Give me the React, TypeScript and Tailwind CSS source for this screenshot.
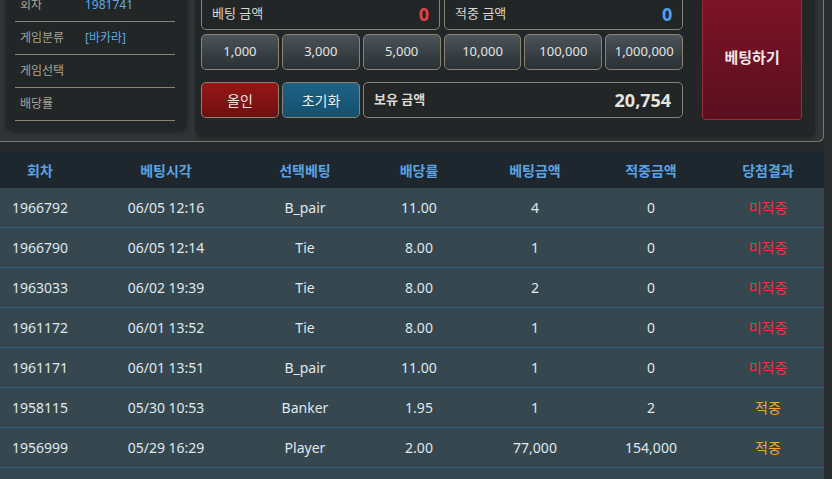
import React from 'react'

const chips = ['1,000', '3,000', '5,000', '10,000', '100,000', '1,000,000']

type Row = {
    round: string
    time: string
    pick: string
    odds: string
    bet: string
    win: string
    hit: boolean
}

const rows: Row[] = [
    { round: '1966792', time: '06/05 12:16', pick: 'B_pair', odds: '11.00', bet: '4', win: '0', hit: false },
    { round: '1966790', time: '06/05 12:14', pick: 'Tie', odds: '8.00', bet: '1', win: '0', hit: false },
    { round: '1963033', time: '06/02 19:39', pick: 'Tie', odds: '8.00', bet: '2', win: '0', hit: false },
    { round: '1961172', time: '06/01 13:52', pick: 'Tie', odds: '8.00', bet: '1', win: '0', hit: false },
    { round: '1961171', time: '06/01 13:51', pick: 'B_pair', odds: '11.00', bet: '1', win: '0', hit: false },
    { round: '1958115', time: '05/30 10:53', pick: 'Banker', odds: '1.95', bet: '1', win: '2', hit: true },
    { round: '1956999', time: '05/29 16:29', pick: 'Player', odds: '2.00', bet: '77,000', win: '154,000', hit: true },
]

const cols = 'grid grid-cols-[80px_172px_106px_122px_110px_122px_1fr]'

const InfoRow = ({ label, value }: { label: string; value?: string }) => (
    <div className="flex items-center h-[33px] border-b border-[#8a8273] text-[12px]">
        <span className="w-[70px] pl-[5px] text-[#a7a498]">{label}</span>
        <span className="text-[#5ea9e2]">{value}</span>
    </div>
)

export default function App() {
    return (
        <div className="w-[832px] h-[479px] overflow-hidden bg-[#2a2d2e] font-['Noto_Sans','Noto_Sans_CJK_KR',sans-serif]">
            {/* top betting area */}
            <div className="w-[824px] h-[182px] -mt-[40px] flex items-start gap-[10px] pl-[5px] pt-[10px] bg-[#2f3537] border-r border-b border-[#7c776d] rounded-br-[6px]">
                {/* left info */}
                <div className="w-[180px] h-[160px] pt-[19px] px-[10px] bg-[#232627] rounded-[6px] shadow-[2px_2px_4px_rgba(0,0,0,0.4)]">
                    <InfoRow label="회차" value="1981741" />
                    <InfoRow label="게임분류" value="[바카라]" />
                    <InfoRow label="게임선택" />
                    <InfoRow label="배당률" />
                </div>

                {/* betting panel */}
                <div className="w-[618px] h-[166px] flex gap-[19px] pl-[6px] pr-[11px] pt-[24px] pb-[17px] bg-[#232627] rounded-[6px] shadow-[2px_2px_4px_rgba(0,0,0,0.4)]">
                    <div className="w-[483px] flex flex-col">
                        <div className="flex gap-[4px]">
                            <div className="flex-1 h-[36px] flex items-end justify-between px-[10px] pb-[6px] border border-[#8a8273] rounded-[5px]">
                                <span className="text-[13px] text-[#d8d6cf]">베팅 금액</span>
                                <span className="text-[18px] font-bold leading-none text-[#e04444]">0</span>
                            </div>
                            <div className="flex-1 h-[36px] flex items-end justify-between px-[10px] pb-[6px] border border-[#8a8273] rounded-[5px]">
                                <span className="text-[13px] text-[#d8d6cf]">적중 금액</span>
                                <span className="text-[18px] font-bold leading-none text-[#4ba3ea]">0</span>
                            </div>
                        </div>
                        <div className="grid grid-cols-6 gap-[3px] mt-[4px]">
                            {chips.map((c) => (
                                <button key={c} className="h-[36px] text-[13px] text-[#e4e4e0] bg-gradient-to-b from-[#4b545a] to-[#2a3034] border border-[#8a8273] rounded-[5px]">
                                    {c}
                                </button>
                            ))}
                        </div>
                        <div className="flex gap-[3px] mt-[12px]">
                            <button className="w-[78px] h-[36px] text-[14px] text-[#f0e8e6] bg-gradient-to-b from-[#981616] to-[#6e1010] border border-[#8a8273] rounded-[5px]">
                                올인
                            </button>
                            <button className="w-[78px] h-[36px] text-[14px] text-[#e8eef2] bg-gradient-to-b from-[#1e6284] to-[#15506e] border border-[#8a8273] rounded-[5px]">
                                초기화
                            </button>
                            <div className="flex-1 h-[36px] flex items-center justify-between pl-[10px] pr-[11px] border border-[#8a8273] rounded-[5px]">
                                <span className="text-[13px] font-bold text-[#dcdad2]">보유 금액</span>
                                <span className="text-[18px] font-bold text-[#e6e4de]">20,754</span>
                            </div>
                        </div>
                    </div>
                    <button className="w-[100px] -mb-[1px] text-[15px] font-bold text-[#f2e6e8] bg-gradient-to-b from-[#7e1428] to-[#5a0f1f] border border-[#a0283a] rounded-[4px]">
                        베팅하기
                    </button>
                </div>
            </div>

            <div className="w-[824px] h-[10px] bg-[#25282a]" />

            {/* history table */}
            <div className="w-[824px]">
                <div className={`${cols} h-[36px] items-center bg-[#1f272e] text-[14px] font-bold text-[#5aa3e3] text-center`}>
                    <span>회차</span>
                    <span>베팅시각</span>
                    <span>선택베팅</span>
                    <span>배당률</span>
                    <span>베팅금액</span>
                    <span>적중금액</span>
                    <span>당첨결과</span>
                </div>
                {rows.map((r) => (
                    <div key={r.round} className={`${cols} h-[40px] items-center bg-[#37474f] border-b border-[#2b5d7c] text-[14px] text-[#dfe8ec] text-center`}>
                        <span>{r.round}</span>
                        <span>{r.time}</span>
                        <span>{r.pick}</span>
                        <span>{r.odds}</span>
                        <span>{r.bet}</span>
                        <span>{r.win}</span>
                        <span className={r.hit ? 'text-[#f2a33a]' : 'text-[#e2393f]'}>{r.hit ? '적중' : '미적중'}</span>
                    </div>
                ))}
                <div className="h-[40px] bg-[#37474f]" />
            </div>
        </div>
    )
}
